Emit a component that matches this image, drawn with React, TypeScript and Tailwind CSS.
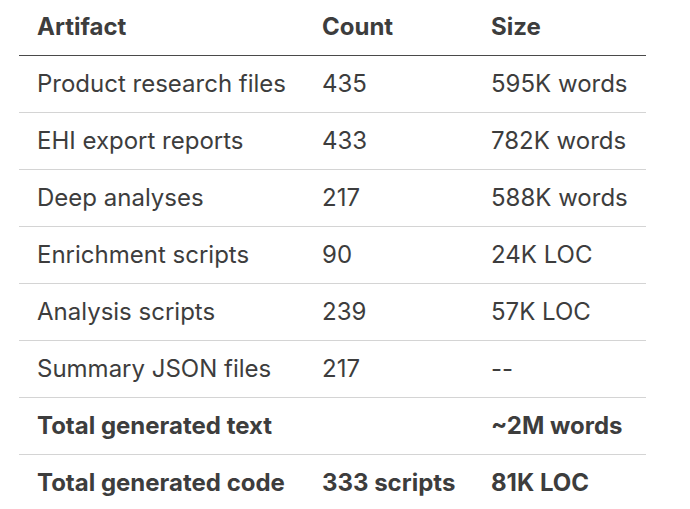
import React from "react";

const rows: [string, string, string][] = [
  ["Product research files", "435", "595K words"],
  ["EHI export reports", "433", "782K words"],
  ["Deep analyses", "217", "588K words"],
  ["Enrichment scripts", "90", "24K LOC"],
  ["Analysis scripts", "239", "57K LOC"],
  ["Summary JSON files", "217", "--"],
];

const totals: [string, string, string][] = [
  ["Total generated text", "", "~2M words"],
  ["Total generated code", "333 scripts", "81K LOC"],
];

export default function App() {
  return (
    <div className="bg-white w-[690px] h-[509px] overflow-hidden pl-[19px]" style={{ fontFamily: "Inter, 'Noto Sans', sans-serif" }}>
      <table className="border-collapse text-[24px] leading-[28px] text-[#3d3d3d] table-fixed w-[627px]">
        <colgroup>
          <col className="w-[285px]" />
          <col className="w-[169px]" />
          <col className="w-[173px]" />
        </colgroup>
        <thead>
          <tr className="h-[55px] border-b border-[#4a4a4a]">
            <th className="text-left font-bold pl-[18px] pb-[1px]">Artifact</th>
            <th className="text-left font-bold pl-[18px] pb-[1px]">Count</th>
            <th className="text-left font-bold pl-[18px] pb-[1px]">Size</th>
          </tr>
        </thead>
        <tbody>
          {rows.map((r, i) => (
            <tr key={i} className="h-[57px] border-b border-[#d4d4d4]">
              {r.map((c, j) => (
                <td key={j} className="pl-[18px] whitespace-nowrap">{c}</td>
              ))}
            </tr>
          ))}
          {totals.map((r, i) => (
            <tr key={i} className={i === 0 ? "h-[57px] border-b border-[#d4d4d4]" : "h-[57px]"}>
              {r.map((c, j) => (
                <td key={j} className="pl-[18px] font-bold whitespace-nowrap">{c}</td>
              ))}
            </tr>
          ))}
        </tbody>
      </table>
    </div>
  );
}
